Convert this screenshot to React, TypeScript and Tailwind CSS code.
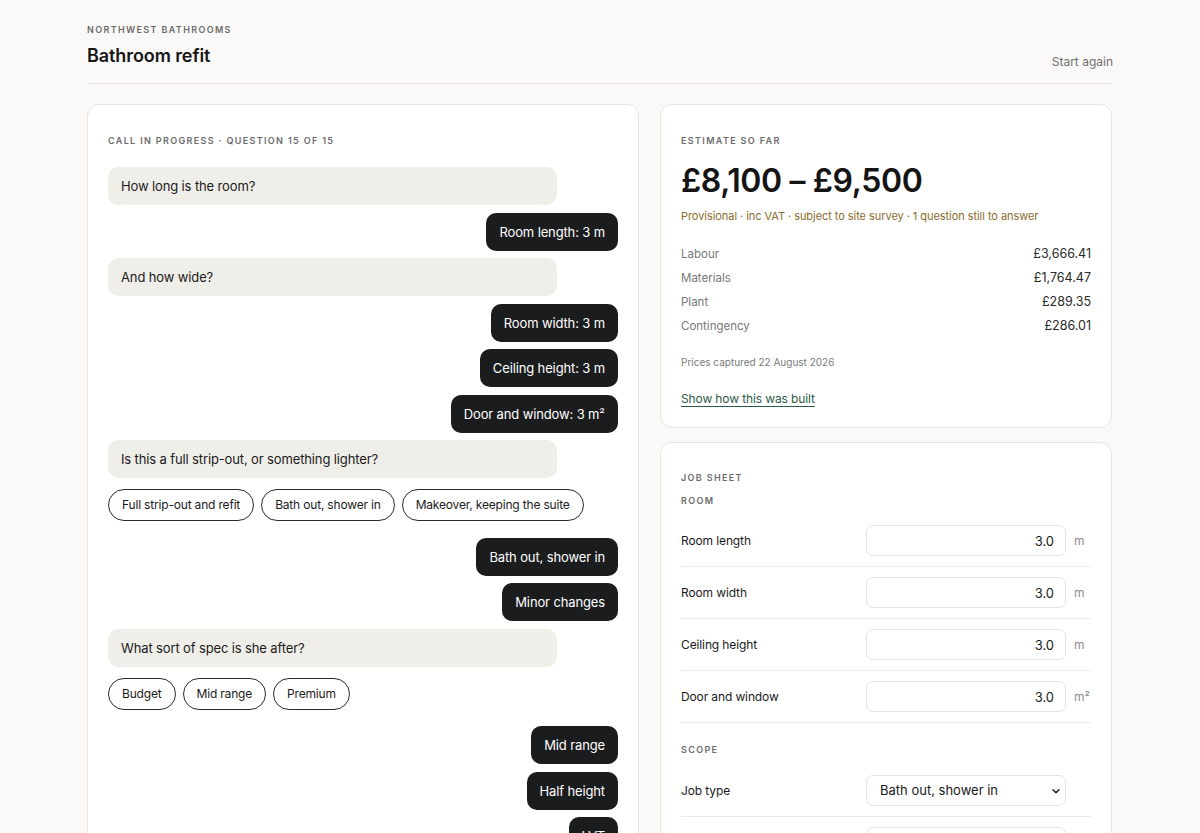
import React from 'react'

type Msg =
  | { kind: 'q'; text: string }
  | { kind: 'a'; text: string }
  | { kind: 'chips'; options: string[] }

const conversation: Msg[] = [
  { kind: 'q', text: 'How long is the room?' },
  { kind: 'a', text: 'Room length: 3 m' },
  { kind: 'q', text: 'And how wide?' },
  { kind: 'a', text: 'Room width: 3 m' },
  { kind: 'a', text: 'Ceiling height: 3 m' },
  { kind: 'a', text: 'Door and window: 3 m²' },
  { kind: 'q', text: 'Is this a full strip-out, or something lighter?' },
  { kind: 'chips', options: ['Full strip-out and refit', 'Bath out, shower in', 'Makeover, keeping the suite'] },
  { kind: 'a', text: 'Bath out, shower in' },
  { kind: 'a', text: 'Minor changes' },
  { kind: 'q', text: 'What sort of spec is she after?' },
  { kind: 'chips', options: ['Budget', 'Mid range', 'Premium'] },
  { kind: 'a', text: 'Mid range' },
  { kind: 'a', text: 'Half height' },
  { kind: 'a', text: 'LVT' },
  { kind: 'q', text: 'Anything else we should know about access?' },
]

const costs = [
  { label: 'Labour', value: '£3,666.41' },
  { label: 'Materials', value: '£1,764.47' },
  { label: 'Plant', value: '£289.35' },
  { label: 'Contingency', value: '£286.01' },
]

const roomFields = [
  { label: 'Room length', value: '3.0', unit: 'm' },
  { label: 'Room width', value: '3.0', unit: 'm' },
  { label: 'Ceiling height', value: '3.0', unit: 'm' },
  { label: 'Door and window', value: '3.0', unit: 'm²' },
]

const scopeFields = [
  { label: 'Job type', value: 'Bath out, shower in' },
  { label: 'Changes', value: 'Minor changes' },
  { label: 'Spec', value: 'Mid range' },
  { label: 'Tiling', value: 'Half height' },
  { label: 'Flooring', value: 'LVT' },
]

function Eyebrow({ children, className = '' }: { children: React.ReactNode; className?: string }) {
  return (
    <div className={`text-[9px] leading-[12px] font-semibold tracking-[0.15em] uppercase text-[#6b6b6b] ${className}`}>
      {children}
    </div>
  )
}

function Chevron() {
  return (
    <svg width="10" height="10" viewBox="0 0 24 24" fill="none" stroke="#1f1f1f" strokeWidth="3.6" strokeLinecap="round" strokeLinejoin="round">
      <path d="m5 9 7 7 7-7" />
    </svg>
  )
}

export default function App() {
  return (
    <div className="min-h-screen bg-[#faf9f7] text-[#1c1c1c]" style={{ fontFamily: 'Inter, "Noto Sans", sans-serif' }}>
      <div className="w-[1026px] mx-auto pt-[24px] pb-10">
        {/* Header */}
        <div className="flex items-end justify-between pb-[13px] border-b border-[#e6e3de]">
          <div>
            <Eyebrow>Northwest Bathrooms</Eyebrow>
            <h1 className="mt-[6px] text-[18px] leading-[28px] font-semibold tracking-[-0.005em] text-[#161616]">Bathroom refit</h1>
          </div>
          <button className="text-[12px] leading-[20px] text-[#6f6f6f] mb-[-2px]">Start again</button>
        </div>

        <div className="mt-[20px] flex items-start gap-[21px]">
          {/* Conversation */}
          <div className="w-[552px] bg-white border border-[#e8e5e0] rounded-[12px] px-[20px] pt-[30px] pb-6">
            <Eyebrow className="mb-[20px]">Call in progress · Question 15 of 15</Eyebrow>
            <div className="flex flex-col gap-[7.5px]">
              {conversation.map((m, i) => {
                if (m.kind === 'q') {
                  return (
                    <div key={i} className="w-[449px] bg-[#f0eee9] rounded-[10px] px-[13px] py-[9px] text-[13px] leading-[20px] tracking-[-0.01em] text-[#1a1a1a]">
                      {m.text}
                    </div>
                  )
                }
                if (m.kind === 'a') {
                  return (
                    <div key={i} className="self-end bg-[#1b1c1e] text-white rounded-[10px] px-[13px] py-[9px] text-[13px] leading-[20px] tracking-[-0.01em]">
                      {m.text}
                    </div>
                  )
                }
                return (
                  <div key={i} className="flex gap-[7px] mt-[3.5px] mb-[9px]">
                    {m.options.map(o => (
                      <button key={o} className="h-[32px] px-[13px] whitespace-nowrap rounded-full border border-[#2b2b2b] bg-white text-[12px] tracking-[-0.015em] text-[#1a1a1a]">
                        {o}
                      </button>
                    ))}
                  </div>
                )
              })}
            </div>
          </div>

          {/* Right column */}
          <div className="w-[452px] flex flex-col gap-[14px]">
            <div className="bg-white border border-[#e8e5e0] rounded-[12px] px-[20px] pt-[30px] pb-[18px]">
              <Eyebrow>Estimate so far</Eyebrow>
              <div className="mt-[14px] text-[32px] leading-[40px] font-semibold tracking-[-0.012em] text-[#141414]">£8,100 – £9,500</div>
              <div className="mt-[7px] text-[11px] leading-[16px] tracking-[-0.005em] text-[#8a6b2c]">
                Provisional · inc VAT · subject to site survey · 1 question still to answer
              </div>
              <div className="mt-[18px]">
                {costs.map(c => (
                  <div key={c.label} className="flex justify-between leading-[24px]">
                    <span className="text-[11.5px] text-[#777777]">{c.label}</span>
                    <span className="text-[12.5px] text-[#2a2a2a]">{c.value}</span>
                  </div>
                ))}
              </div>
              <div className="mt-[16px] text-[10px] leading-[16px] text-[#7a7a7a]">Prices captured 22 August 2026</div>
              <a href="#" className="inline-block mt-[19px] text-[12px] leading-[20px] tracking-[-0.01em] text-[#2e5a45] underline underline-offset-[3px] decoration-[#2e5a45]">
                Show how this was built
              </a>
            </div>

            <div className="bg-white border border-[#e8e5e0] rounded-[12px] px-[20px] pt-[29px] pb-6">
              <Eyebrow>Job sheet</Eyebrow>
              <Eyebrow className="mt-[11px]">Room</Eyebrow>
              <div className="mt-[8px]">
                {roomFields.map(f => (
                  <div key={f.label} className="flex items-center py-[10px] border-b border-[#ecebe7]">
                    <span className="flex-1 text-[12px] tracking-[-0.01em] text-[#1a1a1a]">{f.label}</span>
                    <input
                      readOnly
                      value={f.value}
                      className="w-[200px] h-[31px] border border-[#e6e3de] rounded-[7px] px-[11px] text-right text-[13px] text-[#1a1a1a] outline-none"
                    />
                    <span className="w-[17px] ml-[8px] text-[12px] text-[#8a8a8a]">{f.unit}</span>
                  </div>
                ))}
              </div>
              <Eyebrow className="mt-[21px]">Scope</Eyebrow>
              <div className="mt-[9px]">
                {scopeFields.map(f => (
                  <div key={f.label} className="flex items-center py-[10px] border-b border-[#ecebe7]">
                    <span className="flex-1 text-[12px] tracking-[-0.01em] text-[#1a1a1a]">{f.label}</span>
                    <div className="relative w-[200px] h-[31px] border border-[#e6e3de] rounded-[7px] flex items-center pl-[13px] text-[13px] text-[#1a1a1a]">
                      {f.value}
                      <span className="absolute right-[4px] top-[10px]"><Chevron /></span>
                    </div>
                    <span className="w-[17px] ml-[8px]" />
                  </div>
                ))}
              </div>
            </div>
          </div>
        </div>
      </div>
    </div>
  )
}
